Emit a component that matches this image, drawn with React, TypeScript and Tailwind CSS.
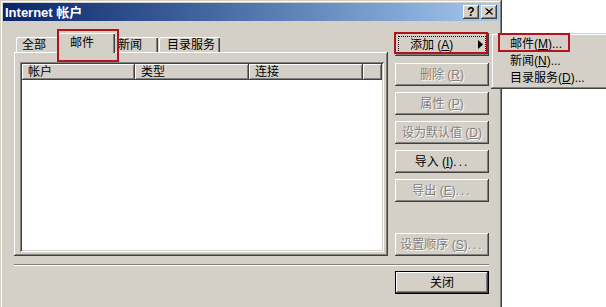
import React from 'react';

// Win2000 风格的凸起/凹陷边框
const raised = 'shadow-[inset_-1px_-1px_0_#404040,inset_1px_1px_0_#fff,inset_-2px_-2px_0_#808080]';
const disabledText = 'text-[#808080] [text-shadow:1px_1px_0_#fff]';

type BtnProps = { children: React.ReactNode; disabled?: boolean; className?: string };

const Btn: React.FC<BtnProps> = ({ children, disabled, className = '' }) => (
    <div
        className={`relative h-[23px] w-[94px] flex items-center justify-center bg-[#d4d0c8] ${raised} ${disabled ? disabledText : 'text-black'} ${className}`}
    >
        {children}
    </div>
);

const Dots = () => <span className="tracking-[2px]">...</span>;

export default function App() {
    return (
        <div className="relative w-[606px] h-[307px] overflow-hidden bg-white text-[12px] leading-none font-['Liberation_Sans','Noto_Sans_CJK_SC',sans-serif]">
            {/* 窗口 */}
            <div className="w-[502px] h-[320px] bg-[#d4d0c8] p-[3px] flex flex-col shadow-[inset_-1px_-1px_0_#404040,inset_1px_1px_0_#d4d0c8,inset_-2px_-2px_0_#808080,inset_2px_2px_0_#fff]">
                {/* 标题栏 */}
                <div className="h-[18px] flex items-center pl-[2px] pr-[2px] bg-linear-to-r from-[#0a246a] to-[#a6caf0]">
                    <span className="text-white font-bold text-[13px]">Internet 帐户</span>
                    <div className="ml-auto flex gap-[2px]">
                        <div className={`w-[16px] h-[14px] bg-[#d4d0c8] ${raised} flex items-center justify-center text-black font-bold text-[12px] pb-[1px]`}>
                            ?
                        </div>
                        <div className={`w-[16px] h-[14px] bg-[#d4d0c8] ${raised} flex items-center justify-center`}>
                            <svg width="8" height="7" viewBox="0 0 8 7" className="mb-[1px]">
                                <path d="M0.5 0.5 L7 6.5 M1.5 0.5 L8 6.5 M7 0.5 L0.5 6.5 M8 0.5 L1.5 6.5" stroke="#000" strokeWidth="1" />
                            </svg>
                        </div>
                    </div>
                </div>

                {/* 主体 */}
                <div className="flex flex-col pl-[11px] pt-[12px]">
                    <div className="flex gap-[7px]">
                        {/* 左侧：标签页 */}
                        <div className="w-[374px] flex flex-col">
                            <div className="h-[19px] flex items-end pl-[2px]">
                                <div className="h-[15px] w-[44px] pl-[6px] pt-[2px] rounded-tl-[2px] bg-[#d4d0c8] shadow-[inset_1px_1px_0_#fff,inset_-1px_0_0_#404040,inset_-2px_0_0_#808080]">
                                    全部
                                </div>
                                <div className="relative z-10 -ml-[2px] -mb-[1px] h-[20px] w-[57px] pl-[12px] pt-[4px] rounded-tl-[2px] bg-[#d4d0c8] shadow-[inset_1px_1px_0_#fff,inset_-1px_0_0_#404040,inset_-2px_0_0_#808080]">
                                    邮件
                                    <div className="absolute -left-[1px] -right-[4px] -top-[4px] -bottom-[9px] border-2 border-[#b3141c]" />
                                </div>
                                <div className="-ml-[2px] h-[15px] w-[45px] pl-[5px] pt-[2px] bg-[#d4d0c8] shadow-[inset_1px_1px_0_#fff,inset_-1px_0_0_#404040,inset_-2px_0_0_#808080]">
                                    新闻
                                </div>
                                <div className="ml-[1px] h-[15px] w-[61px] pl-[8px] pt-[2px] rounded-tl-[2px] bg-[#d4d0c8] shadow-[inset_1px_1px_0_#fff,inset_-1px_0_0_#404040,inset_-2px_0_0_#808080]">
                                    目录服务
                                </div>
                            </div>
                            <div className="h-[204px] pl-[6px] pt-[10px] pr-[4px] pb-[4px] bg-[#d4d0c8] shadow-[inset_-1px_-1px_0_#404040,inset_1px_1px_0_#fff,inset_-2px_-2px_0_#808080]">
                                {/* 列表 */}
                                <div className="h-full bg-white p-[2px] shadow-[inset_1px_1px_0_#808080,inset_-1px_-1px_0_#fff,inset_2px_2px_0_#404040,inset_-2px_-2px_0_#d4d0c8]">
                                    <div className="flex h-[16px]">
                                        <div className={`w-[113px] pl-[6px] flex items-center bg-[#d4d0c8] ${raised}`}>帐户</div>
                                        <div className={`w-[114px] pl-[6px] flex items-center bg-[#d4d0c8] ${raised}`}>类型</div>
                                        <div className={`w-[114px] pl-[6px] flex items-center bg-[#d4d0c8] ${raised}`}>连接</div>
                                        <div className={`flex-1 bg-[#d4d0c8] ${raised}`} />
                                    </div>
                                </div>
                            </div>
                        </div>

                        {/* 右侧按钮 */}
                        <div className="w-[94px] flex flex-col">
                            <Btn className="justify-start pl-[15px]">
                                <span>添加 (<u>A</u>)</span>
                                <div className="absolute inset-[3px] border border-dotted border-black" />
                                <svg width="5" height="9" viewBox="0 0 5 9" className="absolute right-[6px] top-[7px]">
                                    <path d="M0 0 L5 4.5 L0 9 Z" fill="#000" />
                                </svg>
                                <div className="absolute -left-[1px] right-[1px] -top-[1px] bottom-[2px] border-2 border-[#b3141c]" />
                            </Btn>
                            <Btn disabled className="mt-[7px]">删除 (<u>R</u>)</Btn>
                            <Btn disabled className="mt-[6px]">属性 (<u>P</u>)</Btn>
                            <Btn disabled className="mt-[6px]">设为默认值 (<u>D</u>)</Btn>
                            <Btn className="mt-[6px]">导入 (<u>I</u>)<Dots /></Btn>
                            <Btn disabled className="mt-[6px]">导出 (<u>E</u>)<Dots /></Btn>
                            <Btn disabled className="mt-[31px]">设置顺序 (<u>S</u>)<Dots /></Btn>
                        </div>
                    </div>

                    {/* 分隔线 */}
                    <div className="mt-[8px] w-[475px] h-[2px] border-t border-[#808080] border-b border-b-white" />

                    {/* 关闭 */}
                    <div className="mt-[5px] ml-[381px] w-[94px] h-[23px] border border-black">
                        <div className={`h-full w-full flex items-center justify-center bg-[#d4d0c8] ${raised}`}>关闭</div>
                    </div>
                </div>
            </div>

            {/* 弹出菜单 */}
            <div className="absolute left-[491px] top-[33px] w-[120px] pt-[2px] pb-[3px] bg-[#d4d0c8] shadow-[inset_-1px_-1px_0_#404040,inset_1px_1px_0_#d4d0c8,inset_-2px_-2px_0_#808080,inset_2px_2px_0_#fff]">
                <div className="h-[17px] pl-[19px] flex items-center">邮件(<u>M</u>)...</div>
                <div className="h-[17px] pl-[19px] flex items-center">新闻(<u>N</u>)...</div>
                <div className="h-[17px] pl-[19px] flex items-center">目录服务(<u>D</u>)...</div>
                <div className="absolute left-[7px] top-0 w-[72px] h-[19px] border-2 border-[#b3141c]" />
            </div>
        </div>
    );
}
